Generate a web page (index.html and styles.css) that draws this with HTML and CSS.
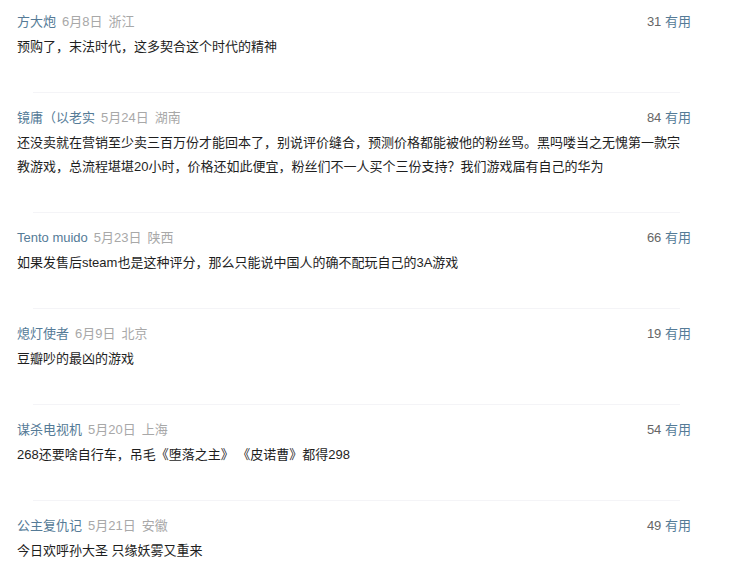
FILE: index.html
```html
<!DOCTYPE html>
<html lang="zh-CN">
<head>
  <meta charset="UTF-8" />
  <meta name="viewport" content="width=device-width, initial-scale=1" />
  <title>短评</title>
  <link rel="stylesheet" href="styles.css">
</head>
<body>
  <div class="comments">
    <div class="comment">
      <div class="comment-info">
        <span class="meta"><a class="user" href="#">方大炮</a><span class="time">6月8日</span><span class="loc">浙江</span></span>
        <span class="votes"><span class="count">31</span> <a href="#">有用</a></span>
      </div>
      <p class="text">预购了，末法时代，这多契合这个时代的精神</p>
    </div>

    <div class="comment">
      <div class="comment-info">
        <span class="meta"><a class="user" href="#">镜庸（以老实</a><span class="time">5月24日</span><span class="loc">湖南</span></span>
        <span class="votes"><span class="count">84</span> <a href="#">有用</a></span>
      </div>
      <p class="text">还没卖就在营销至少卖三百万份才能回本了，别说评价缝合，预测价格都能被他的粉丝骂。黑吗喽当之无愧第一款宗教游戏，总流程堪堪20小时，价格还如此便宜，粉丝们不一人买个三份支持？我们游戏届有自己的华为</p>
    </div>

    <div class="comment">
      <div class="comment-info">
        <span class="meta"><a class="user" href="#">Tento muido</a><span class="time">5月23日</span><span class="loc">陕西</span></span>
        <span class="votes"><span class="count">66</span> <a href="#">有用</a></span>
      </div>
      <p class="text">如果发售后steam也是这种评分，那么只能说中国人的确不配玩自己的3A游戏</p>
    </div>

    <div class="comment">
      <div class="comment-info">
        <span class="meta"><a class="user" href="#">熄灯使者</a><span class="time">6月9日</span><span class="loc">北京</span></span>
        <span class="votes"><span class="count">19</span> <a href="#">有用</a></span>
      </div>
      <p class="text">豆瓣吵的最凶的游戏</p>
    </div>

    <div class="comment">
      <div class="comment-info">
        <span class="meta"><a class="user" href="#">谋杀电视机</a><span class="time">5月20日</span><span class="loc">上海</span></span>
        <span class="votes"><span class="count">54</span> <a href="#">有用</a></span>
      </div>
      <p class="text">268还要啥自行车，吊毛《堕落之主》 《皮诺曹》都得298</p>
    </div>

    <div class="comment">
      <div class="comment-info">
        <span class="meta"><a class="user" href="#">公主复仇记</a><span class="time">5月21日</span><span class="loc">安徽</span></span>
        <span class="votes"><span class="count">49</span> <a href="#">有用</a></span>
      </div>
      <p class="text">今日欢呼孙大圣 只缘妖雾又重来</p>
    </div>
  </div>
</body>
</html>
```

FILE: styles.css
```css
body {
  margin: 0;
  background: #fff;
  font-family: "Liberation Sans", "Noto Sans CJK SC", sans-serif;
  font-size: 13px;
  color: #222;
}
a {
  text-decoration: none;
}
.comments {
  width: 674px;
  padding-left: 17px;
}
.comment {
  padding: 15px 0 33px;
}
.comment:first-child {
  padding-top: 12px;
}
.comment + .comment {
  padding-top: 0;
}
/* faint divider between comments */
.comment + .comment::before {
  content: "";
  display: block;
  height: 1px;
  margin: 0 11px 15px 16px;
  background: #f4f4f7;
}
.comment-info {
  display: flex;
  justify-content: space-between;
  line-height: 20px;
  height: 20px;
}
.user {
  color: #557b97;
}
.time, .loc {
  color: #a8a8a8;
  margin-left: 6px;
}
.votes {
  color: #666;
}
.votes a {
  color: #557b97;
}
.text {
  margin: 3px 0 0;
  line-height: 24px;
  color: #1e1e1e;
}
```
